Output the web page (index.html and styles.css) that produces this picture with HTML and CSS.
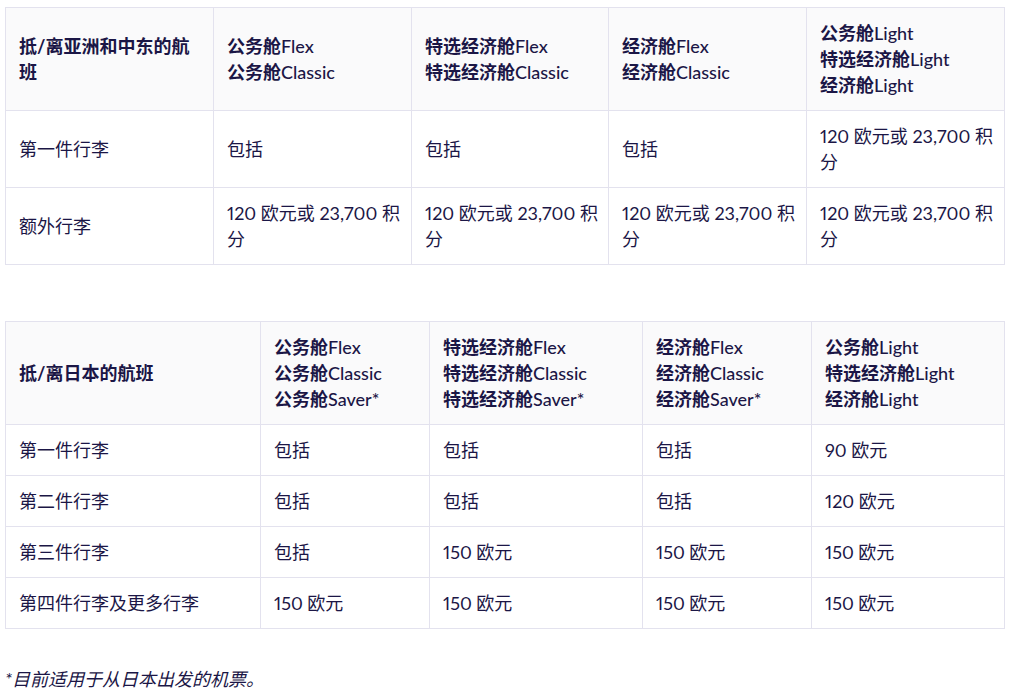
FILE: index.html
```html
<!DOCTYPE html>
<html lang="zh-CN">
<head>
<meta charset="utf-8">
<link rel="stylesheet" href="styles.css">
</head>
<body>
<div class="page">
  <table class="bag t1">
    <colgroup><col style="width:208px"><col style="width:198px"><col style="width:197px"><col style="width:198px"><col style="width:198px"></colgroup>
    <thead>
      <tr>
        <th><b>抵/离亚洲和中东的航班</b></th>
        <th><b>公务舱</b>Flex<br><b>公务舱</b>Classic</th>
        <th><b>特选经济舱</b>Flex<br><b>特选经济舱</b>Classic</th>
        <th><b>经济舱</b>Flex<br><b>经济舱</b>Classic</th>
        <th><b>公务舱</b>Light<br><b>特选经济舱</b>Light<br><b>经济舱</b>Light</th>
      </tr>
    </thead>
    <tbody>
      <tr><td>第一件行李</td><td>包括</td><td>包括</td><td>包括</td><td>120 欧元或 23,700 积分</td></tr>
      <tr><td>额外行李</td><td>120 欧元或 23,700 积分</td><td>120 欧元或 23,700 积分</td><td>120 欧元或 23,700 积分</td><td>120 欧元或 23,700 积分</td></tr>
    </tbody>
  </table>

  <table class="bag t2">
    <colgroup><col style="width:255px"><col style="width:169px"><col style="width:213px"><col style="width:169px"><col style="width:193px"></colgroup>
    <thead>
      <tr>
        <th><b>抵/离日本的航班</b></th>
        <th><b>公务舱</b>Flex<br><b>公务舱</b>Classic<br><b>公务舱</b>Saver*</th>
        <th><b>特选经济舱</b>Flex<br><b>特选经济舱</b>Classic<br><b>特选经济舱</b>Saver*</th>
        <th><b>经济舱</b>Flex<br><b>经济舱</b>Classic<br><b>经济舱</b>Saver*</th>
        <th><b>公务舱</b>Light<br><b>特选经济舱</b>Light<br><b>经济舱</b>Light</th>
      </tr>
    </thead>
    <tbody>
      <tr><td>第一件行李</td><td>包括</td><td>包括</td><td>包括</td><td>90 欧元</td></tr>
      <tr><td>第二件行李</td><td>包括</td><td>包括</td><td>包括</td><td>120 欧元</td></tr>
      <tr><td>第三件行李</td><td>包括</td><td>150 欧元</td><td>150 欧元</td><td>150 欧元</td></tr>
      <tr><td>第四件行李及更多行李</td><td>150 欧元</td><td>150 欧元</td><td>150 欧元</td><td>150 欧元</td></tr>
    </tbody>
  </table>

  <p class="note">*目前适用于从日本出发的机票。</p>
</div>
</body>
</html>
```

FILE: styles.css
```css
html, body {
  margin: 0;
  padding: 0;
  background: #ffffff;
}

.page {
  padding: 7px 0 0 5px;
  width: 999px;
  font-family: "Lato", "Noto Sans CJK SC", sans-serif;
  font-size: 18px;
  line-height: 26px;
  color: #1b1646;
  font-variant-numeric: proportional-nums;
}

.bag {
  width: 999px;
  border-collapse: collapse;
  table-layout: fixed;
}

.bag th,
.bag td {
  border: 1px solid #e3e2ee;
  padding: 12px 4px 12px 13px;
  text-align: left;
  vertical-align: middle;
}

.bag th {
  background: #fafafb;
  font-weight: 500;
}

.bag th b {
  font-weight: 700;
}

.bag td {
  font-weight: 400;
}

.t1 th:first-child {
  padding-right: 16px;
}

.t2 {
  margin-top: 56px;
}

.note {
  margin: 37px 0 0 0;
  font-style: italic;
}
```
